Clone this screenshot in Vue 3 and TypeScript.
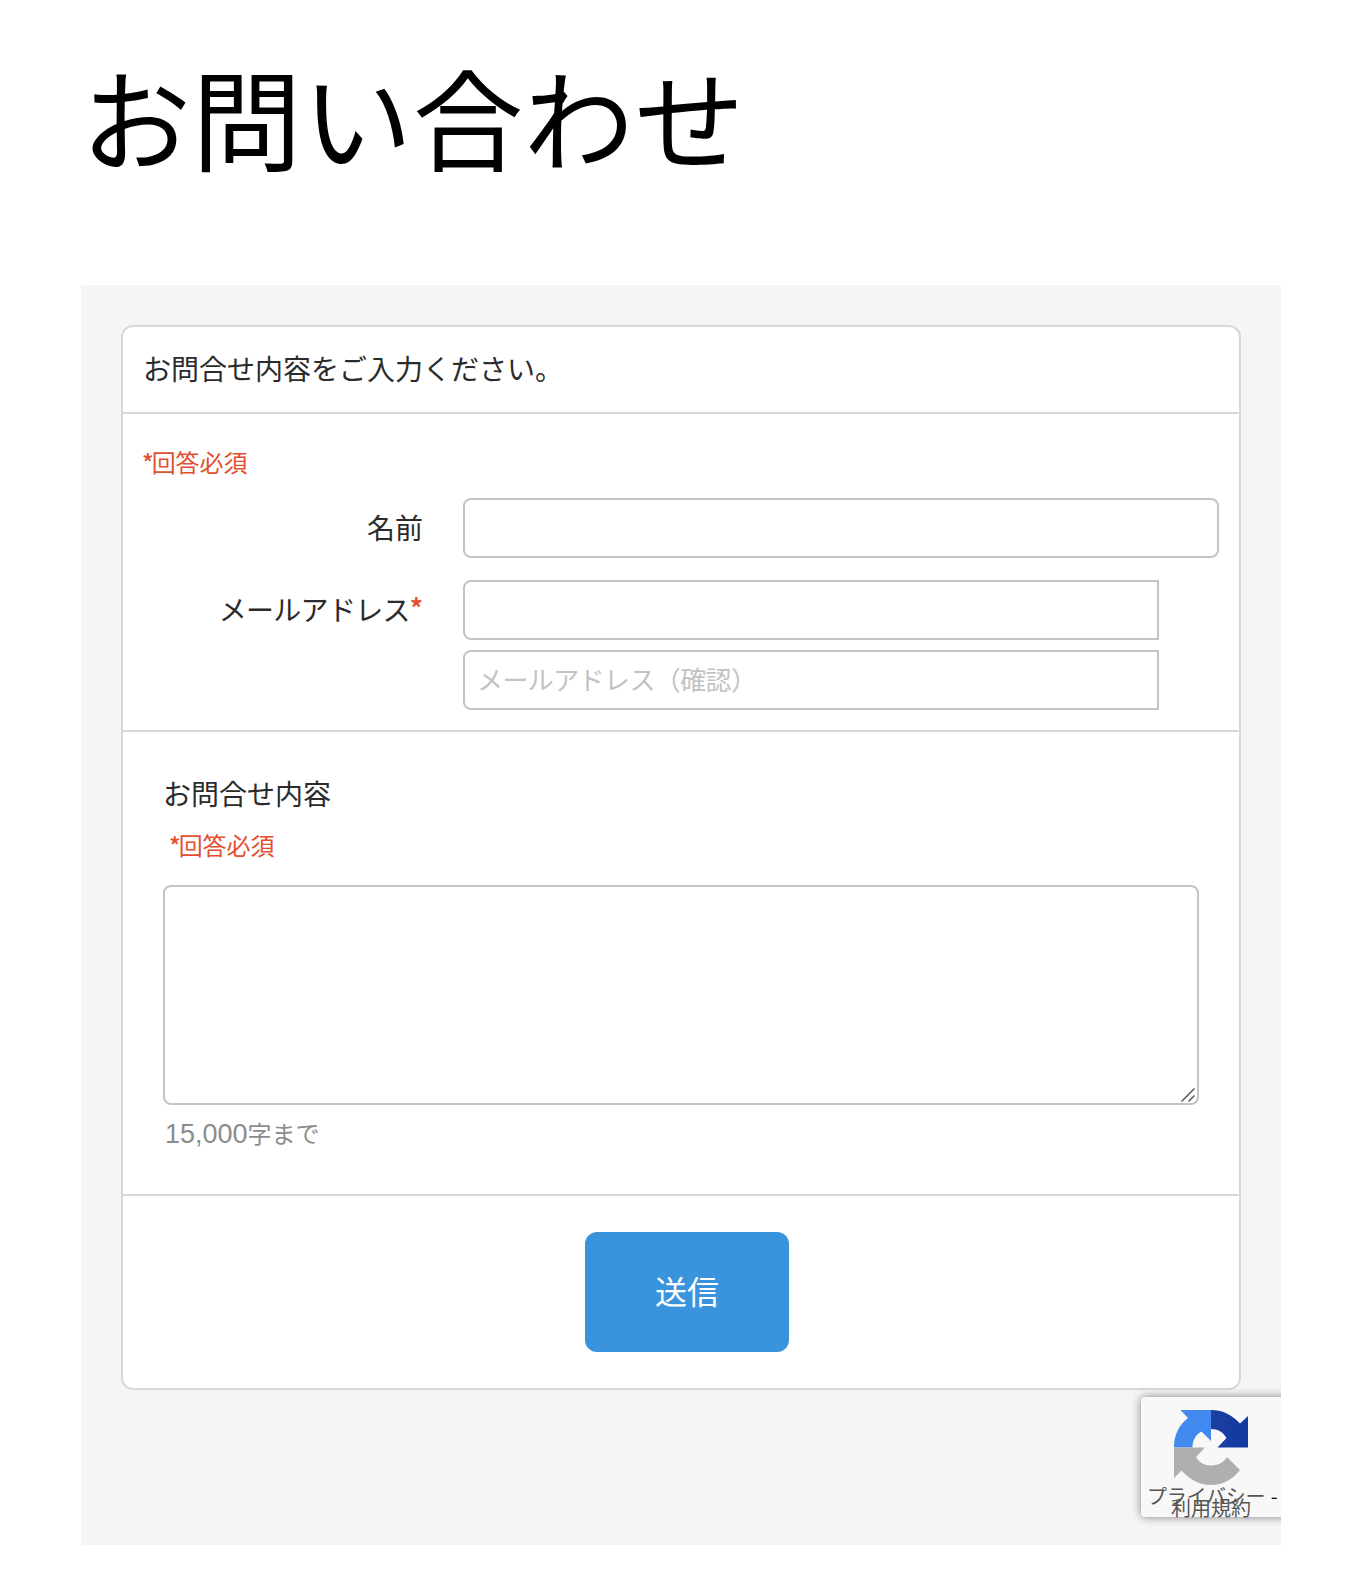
<script setup lang="ts">
import { ref } from 'vue'

const name = ref('')
const email = ref('')
const emailConfirm = ref('')
const message = ref('')
</script>

<template>
  <main class="page">
    <h1 class="title">お問い合わせ</h1>
    <div class="frame">
      <form class="card" @submit.prevent>
        <p class="lead">お問合せ内容をご入力ください。</p>

        <section class="contact">
          <p class="required"><span class="mark">*</span>回答必須</p>
          <div class="row">
            <label class="label" for="name">名前</label>
            <input id="name" v-model="name" class="field" type="text" />
          </div>
          <div class="row">
            <label class="label" for="email"><span class="kana">メールアドレス</span><b class="star">*</b></label>
            <div class="stack">
              <input id="email" v-model="email" class="field cut" type="text" />
              <input v-model="emailConfirm" class="field cut" type="text" placeholder="メールアドレス（確認）" />
            </div>
          </div>
        </section>

        <section class="inquiry">
          <label class="question" for="message">お問合せ内容</label>
          <p class="required indent"><span class="mark">*</span>回答必須</p>
          <div class="area-wrap">
            <textarea id="message" v-model="message" class="area"></textarea>
            <svg class="grip" width="14" height="14" viewBox="0 0 14 14">
              <path d="M.5 13.5l13-13M7.5 13.5l6-6" fill="none" stroke="#58585a" stroke-width="1.5" />
            </svg>
          </div>
          <p class="limit"><span class="num">15,000</span>字まで</p>
        </section>

        <div class="actions">
          <button class="submit" type="submit">送信</button>
        </div>
      </form>

      <aside class="badge">
        <svg class="logo" width="74" height="75" viewBox="0 0 74 75">
          <defs>
            <linearGradient id="navy" x1="0" y1="0" x2="1" y2="0">
              <stop offset="0" stop-color="#1d3f9c" />
              <stop offset=".5" stop-color="#173ca2" />
              <stop offset="1" stop-color="#123a9f" />
            </linearGradient>
          </defs>
          <path d="M37 0C50 0 59 6 66 13.500L74 6V37.500H43.500L52.500 28C49 22 44 19 37 19Z" fill="url(#navy)" />
          <path d="M37 0H6.500L14 8C5 15 0 25 0 37.500H18.500C18.500 31 21 25 27.500 21.500L37 31Z" fill="#4289ef" />
          <path d="M0 37.500V68L7.500 60.500C15 69 25 75 37 75C49 75 59 69 66 60L53 47C50 52 44 55.500 37 55.500C30 55.500 25 52 22 47L31 37.500Z" fill="#afafaf" />
        </svg>
        <span class="terms privacy">プライバシー<i class="dash"> - </i></span>
        <span class="terms rules">利用規約</span>
      </aside>
    </div>
  </main>
</template>

<style>
body {
  background: #fff;
}
</style>

<style scoped>
* {
  box-sizing: border-box;
}
.page {
  width: 1200px;
  height: 1586px;
  margin-left: 81px;
  color: #2b2b2b;
  font-family: "Noto Sans CJK JP", sans-serif;
  overflow: hidden;
}
p,
h1 {
  margin: 0;
  font-weight: 400;
}
.title {
  height: 285px;
  padding-top: 35px;
  color: #000;
  font-size: 110px;
  line-height: 160px;
  letter-spacing: 0.7px;
}
.frame {
  position: relative;
  height: 1260px;
  padding: 40px;
  background: #f5f5f5;
  overflow: hidden;
}
.card {
  height: 1065px;
  border: 2px solid #d8d8d8;
  border-radius: 12px;
  background: #fff;
}
.lead {
  height: 87px;
  padding: 20px 20px 0;
  border-bottom: 2px solid #d8d8d8;
  font-size: 28px;
  line-height: 42px;
}
.contact {
  height: 318px;
  padding: 31px 20px 0;
  border-bottom: 2px solid #d8d8d8;
}
.required {
  color: #e2502f;
  font-size: 24px;
  line-height: 34px;
}
.mark {
  margin-left: -1px;
  letter-spacing: -2px;
  font-weight: 500;
}
.contact .required {
  margin-bottom: 19px;
}
.row {
  display: flex;
  gap: 40px;
  margin-bottom: 22px;
}
.label {
  width: 280px;
  height: 60px;
  text-align: right;
  font-size: 28px;
  line-height: 58px;
  white-space: nowrap;
}
.kana {
  letter-spacing: -0.7px;
}
.star {
  color: #e2502f;
  font-size: 26px;
  line-height: 1;
  vertical-align: 3px;
}
.stack {
  display: flex;
  flex-direction: column;
  gap: 10px;
}
.field {
  display: block;
  width: 756px;
  height: 60px;
  padding: 0 12px 4px;
  border: 2px solid #c4c4c4;
  border-radius: 8px;
  background: #fff;
  font-family: inherit;
  font-size: 26px;
  outline: none;
}
.cut {
  width: 696px;
  border-radius: 8px 0 0 8px;
}
.field::placeholder {
  color: #c3c3c3;
  letter-spacing: -0.6px;
  opacity: 1;
}
.inquiry {
  height: 464px;
  padding: 41px 40px 0;
  border-bottom: 2px solid #d8d8d8;
}
.question {
  display: block;
  font-size: 28px;
  line-height: 40px;
}
.indent {
  margin: 15px 0 23px 7px;
}
.area-wrap {
  position: relative;
}
.area {
  display: block;
  width: 1036px;
  height: 220px;
  border: 2px solid #c4c4c4;
  border-radius: 8px;
  background: #fff;
  resize: none;
  outline: none;
}
.grip {
  position: absolute;
  right: 4px;
  bottom: 3px;
}
.limit {
  margin: 10px 0 0 2px;
  color: #8c8c8c;
  font-size: 24px;
  line-height: 36px;
}
.num {
  font-family: "Liberation Sans", Arial, sans-serif;
  font-size: 27px;
}
.actions {
  display: flex;
  justify-content: center;
  padding: 36px 0 0 12px;
}
.submit {
  width: 204px;
  height: 120px;
  padding: 0 0 4px;
  border: 0;
  border-radius: 12px;
  background: #3a93dd;
  color: #fff;
  font-family: inherit;
  font-size: 32px;
}
.badge {
  position: absolute;
  left: 1060px;
  top: 1112px;
  width: 512px;
  height: 120px;
  border-radius: 4px;
  background: #f8f8f8;
  box-shadow: 0 0 10px #808080;
}
.logo {
  position: absolute;
  left: 33px;
  top: 13px;
}
.terms {
  position: absolute;
  color: #555;
  font-size: 20px;
  line-height: 24px;
  white-space: pre;
}
.privacy {
  left: 6px;
  top: 87px;
  letter-spacing: -0.2px;
}
.rules {
  left: 30px;
  top: 99px;
}
.dash {
  margin-left: 1px;
  color: #111;
  font-style: normal;
}
</style>
